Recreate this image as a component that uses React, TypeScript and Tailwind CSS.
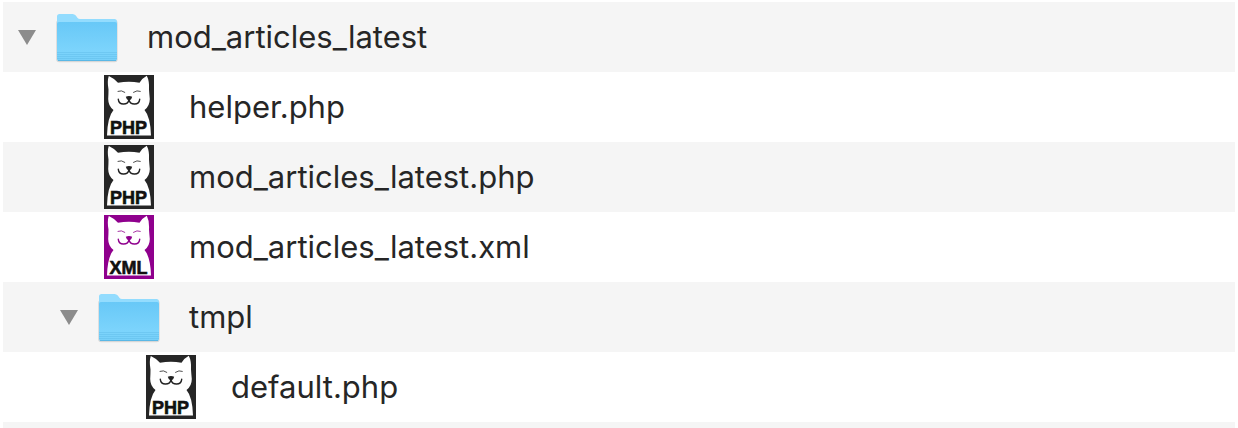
type Kind = "folder" | "php" | "xml";

interface Entry {
  name: string;
  kind: Kind;
  level: 0 | 1 | 2;
}

const entries: Entry[] = [
  { name: "mod_articles_latest", kind: "folder", level: 0 },
  { name: "helper.php", kind: "php", level: 1 },
  { name: "mod_articles_latest.php", kind: "php", level: 1 },
  { name: "mod_articles_latest.xml", kind: "xml", level: 1 },
  { name: "tmpl", kind: "folder", level: 1 },
  { name: "default.php", kind: "php", level: 2 },
];

// Files at a given level line up with the folders of that same level.
const indent = { 0: "pl-[15px]", 1: "pl-[57px]", 2: "pl-[99px]" };

function FolderIcon() {
  return (
    <svg viewBox="0 0 64 52" className="h-[52px] w-16" aria-hidden="true">
      <defs>
        <linearGradient id="folder-front" x1="0" y1="0" x2="0" y2="1">
          <stop offset="0" stopColor="#68c8f7" />
          <stop offset="0.75" stopColor="#7cd4fc" />
          <stop offset="1" stopColor="#76cff9" />
        </linearGradient>
      </defs>
      <rect x="1.2" y="9" width="61.4" height="42.2" rx="3" fill="#000" opacity="0.12" />
      <path d="M2 15V5.500Q2 3 4.500 3H17.500Q19.500 3 20.800 4.600L22.600 7Q23.500 8 25 8H59.500Q62 8 62 11V15Z" fill="#93dcfe" />
      <path d="M2 13Q2 11 4 11H60Q62 11 62 13V47.500Q62 50 59.500 50H4.500Q2 50 2 47.500Z" fill="url(#folder-front)" />
      <path d="M2 41.500H62M2 43.500H62M2 45.500H62M2 47.500H62" stroke="#5cb9e6" strokeWidth="0.8" opacity="0.5" />
      <path d="M3 49.500H61" stroke="#5ab8e6" strokeWidth="1" />
    </svg>
  );
}

function CatIcon({ label, color, face }: { label: string; color: string; face: string }) {
  return (
    <svg viewBox="0 0 50 64" className="h-16 w-[50px]" aria-hidden="true">
      <rect width="50" height="64" fill={color} />
      <path
        d="M4.800 1Q9.500 3 14 7.800Q25 5.500 35.500 7.800Q38.500 3 42.800 0.800Q45.500 6 45 14.500Q45.300 19 45.800 24Q45.800 31 40.500 35Q46.500 42 47 60.500H3Q3.500 42 9.500 35Q4.200 31 4.200 24Q4.500 19 4.500 14.500Q3 6 4.800 1Z"
        fill="#fff"
      />
      <g fill="none" stroke={face} strokeLinecap="round">
        <path d="M14 16.300Q17.500 14.800 20.800 17.300M29.500 17.300Q33 14.800 36.300 16.300" strokeWidth="0.8" />
        <path d="M14.300 24.300C15 30.500 23.500 30.500 25 25C26.500 30.500 35 30.500 35.700 24.300" strokeWidth="1.400" />
      </g>
      <path d="M21.800 21.800Q25 20 28.200 21.800Q27.800 24.500 25 26Q22.200 24.500 21.800 21.800Z" fill={face} />
      <text x="24.500" y="59" textAnchor="middle" fill="#111" stroke="#111" strokeWidth="0.6" className="font-['Liberation_Sans'] text-[18px] font-bold">
        {label}
      </text>
    </svg>
  );
}

function EntryIcon({ kind }: { kind: Kind }) {
  if (kind === "folder") return <FolderIcon />;
  if (kind === "xml") return <CatIcon label="XML" color="#8f008d" face="#8f008d" />;
  return <CatIcon label="PHP" color="#262626" face="#222" />;
}

function Disclosure({ name }: { name: string }) {
  return (
    <button type="button" aria-label={`Collapse ${name}`} className="flex w-[18px] shrink-0 items-center">
      <svg viewBox="0 0 18 15" className="h-[15px] w-[18px]" aria-hidden="true">
        <path d="M0 0H18L9 15Z" fill="#8c8c8c" />
      </svg>
    </button>
  );
}

export default function App() {
  return (
    <main className="bg-white px-[3px] pt-0.5 font-['Inter',sans-serif] text-[31px] leading-9 text-[#262626]">
      <ul>
        {entries.map((e) => (
          <li key={`${e.level}-${e.name}`} className={`flex h-[70px] items-center odd:bg-[#f5f5f5] ${indent[e.level]}`}>
            {e.kind === "folder" ? <Disclosure name={e.name} /> : <span className="w-[18px] shrink-0" />}
            <span className="ml-[19px] flex w-16 shrink-0 justify-center">
              <EntryIcon kind={e.kind} />
            </span>
            <span className="ml-7">{e.name}</span>
          </li>
        ))}
        <li className="h-1.5 bg-[#f5f5f5]" aria-hidden="true" />
      </ul>
    </main>
  );
}
